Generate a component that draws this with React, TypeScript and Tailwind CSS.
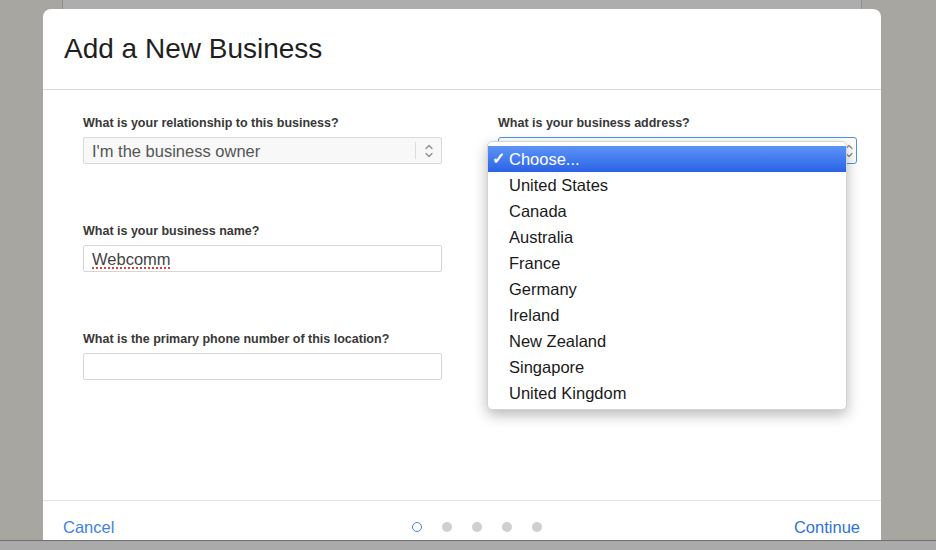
import React from "react";

const countries = [
  "United States",
  "Canada",
  "Australia",
  "France",
  "Germany",
  "Ireland",
  "New Zealand",
  "Singapore",
  "United Kingdom",
];

function Label({ children }: { children: React.ReactNode }) {
  return (
    <div className="h-[16px] text-[12.5px] leading-[16px] font-bold text-[#383838] mb-[6px] whitespace-nowrap">
      {children}
    </div>
  );
}

function UpDown() {
  return (
    <svg width="10" height="18" viewBox="0 0 10 18" fill="none" stroke="#8a8a8a" strokeWidth="1.2" strokeLinecap="round" strokeLinejoin="round">
      <path d="M2 6.5 L5 3.5 L8 6.5" />
      <path d="M2 11.5 L5 14.5 L8 11.5" />
    </svg>
  );
}

export default function App() {
  return (
    <div className="w-[936px] h-[550px] flex flex-col bg-[#a8a6a1] overflow-hidden font-['Liberation_Sans',Arial,sans-serif]">
      {/* top strip of the page behind */}
      <div className="h-[9px] flex shrink-0">
        <div className="w-[62px]" />
        <div className="w-[800px] bg-[#adadad] border-l border-r border-[#8f8f8f]" />
        <div className="flex-1" />
      </div>

      <div className="flex-1 flex min-h-0">
        <div className="w-[43px] shrink-0" />
        <div className="w-[838px] shrink-0 bg-white rounded-t-[8px] flex flex-col">
          {/* header */}
          <div className="h-[81px] shrink-0 border-b border-[#dadada] flex items-center pl-[21px]">
            <h1 className="text-[28px] leading-[34px] text-[#1f1f1f] font-normal">Add a New Business</h1>
          </div>

          {/* body */}
          <div className="flex-1 grid grid-cols-[359px_359px] gap-x-[56px] pl-[40px] pt-[25px] content-start">
            <div className="flex flex-col">
              <Label>What is your relationship to this business?</Label>
              <div className="h-[27px] border border-[#d9d9d9] rounded-[2px] bg-[#f8f8f8] flex items-center">
                <span className="flex-1 pl-[8px] text-[16.5px] leading-[20px] text-[#555]">I'm the business owner</span>
                <div className="w-px h-[17px] bg-[#dcdcdc]" />
                <div className="w-[25px] flex justify-center">
                  <UpDown />
                </div>
              </div>

              <div className="h-[59px]" />
              <Label>What is your business name?</Label>
              <div className="h-[27px] border border-[#d6d6d6] rounded-[2px] bg-white flex items-center pl-[8px]">
                <span className="text-[16.5px] leading-[20px] text-[#444] underline decoration-dotted decoration-[#e0403a] decoration-[1.5px] underline-offset-[3px]">
                  Webcomm
                </span>
              </div>

              <div className="h-[59px]" />
              <Label>What is the primary phone number of this location?</Label>
              <div className="h-[27px] border border-[#d6d6d6] rounded-[2px] bg-white" />
            </div>

            <div className="flex flex-col">
              <Label>What is your business address?</Label>
              <div className="relative h-[27px] border border-[#4f92e3] rounded-[3px] bg-white flex items-center justify-end pr-[2px]">
                <UpDown />
                {/* open dropdown menu */}
                <div className="absolute left-[-12px] top-[3px] w-[360px] bg-white rounded-[5px] border border-[#d4d4d4] shadow-[0_5px_14px_rgba(0,0,0,0.28)] pt-[4px] pb-[3px] z-10">
                  <div className="h-[26px] flex items-center bg-linear-to-b from-[#5d93f6] to-[#2b62e6] text-white pl-[4px]">
                    <span className="w-[17px] text-[16px] leading-[20px] font-bold">✓</span>
                    <span className="text-[16.5px] leading-[20px]">Choose...</span>
                  </div>
                  {countries.map((c) => (
                    <div key={c} className="h-[26px] flex items-center pl-[21px] text-[16.5px] leading-[20px] text-[#1a1a1a]">
                      {c}
                    </div>
                  ))}
                </div>
              </div>
            </div>
          </div>

          {/* footer */}
          <div className="h-[40px] shrink-0 border-t border-[#e2e2e2] flex items-start pt-[16px] pl-[20px] pr-[21px]">
            <span className="w-[349px] text-[16.5px] leading-[20px] text-[#3f82e4]">Cancel</span>
            <div className="h-[20px] flex items-center gap-[20px]">
              <span className="w-[10px] h-[10px] rounded-full border-[1.5px] border-[#3f82e4]" />
              <span className="w-[10px] h-[10px] rounded-full bg-[#cfcfcf]" />
              <span className="w-[10px] h-[10px] rounded-full bg-[#cfcfcf]" />
              <span className="w-[10px] h-[10px] rounded-full bg-[#cfcfcf]" />
              <span className="w-[10px] h-[10px] rounded-full bg-[#cfcfcf]" />
            </div>
            <span className="ml-auto text-[16.5px] leading-[20px] text-[#2c73dc]">Continue</span>
          </div>
        </div>
        <div className="flex-1" />
      </div>

      {/* bottom strip */}
      <div className="h-[10px] shrink-0 border-t border-[#707070] bg-[#aaaaaa]" />
    </div>
  );
}
